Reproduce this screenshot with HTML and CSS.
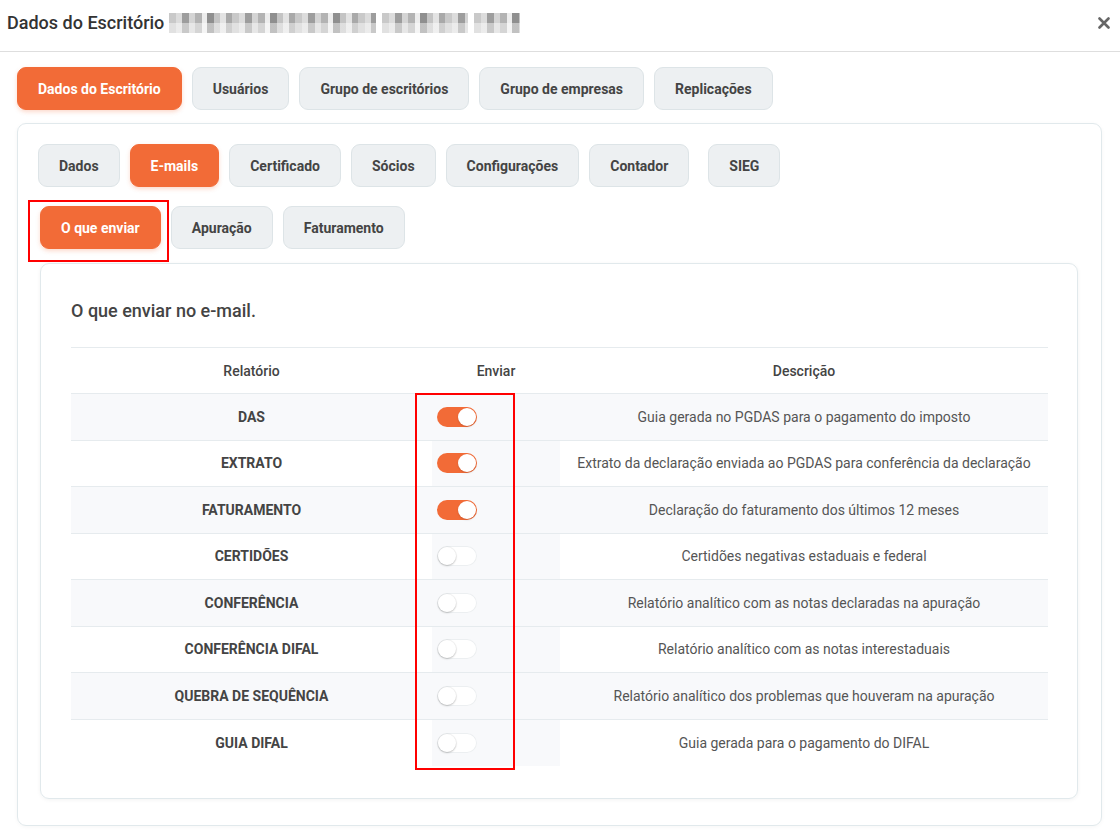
FILE: index.html
```html
<!DOCTYPE html>
<html lang="pt-BR">
<head>
<meta charset="utf-8">
<title>Dados do Escritório</title>
<link rel="stylesheet" href="styles.css">
</head>
<body>
<div class="modal">
  <header class="modal-head">
    <h1 class="modal-title">Dados do Escritório
      <span class="blur"><span class="blur-seg s1"></span><span class="blur-seg s2"></span><span class="blur-seg s3"></span></span>
    </h1>
    <button class="close" aria-label="Fechar">
      <svg width="12" height="12" viewBox="0 0 12 12"><path d="M1.5 1.5 L10.5 10.5 M10.5 1.5 L1.5 10.5" stroke="#666" stroke-width="2.6" stroke-linecap="round"/></svg>
    </button>
  </header>

  <div class="modal-body">
    <nav class="tabs outer-tabs">
      <button class="tab active">Dados do Escritório</button>
      <button class="tab">Usuários</button>
      <button class="tab">Grupo de escritórios</button>
      <button class="tab">Grupo de empresas</button>
      <button class="tab">Replicações</button>
    </nav>

    <section class="panel">
      <nav class="tabs inner-tabs">
        <button class="tab">Dados</button>
        <button class="tab active">E-mails</button>
        <button class="tab">Certificado</button>
        <button class="tab">Sócios</button>
        <button class="tab">Configurações</button>
        <button class="tab">Contador</button>
        <button class="tab sieg">SIEG</button>
      </nav>
      <nav class="tabs sub-tabs">
        <button class="tab active">O que enviar</button>
        <button class="tab">Apuração</button>
        <button class="tab">Faturamento</button>
      </nav>

      <div class="card">
        <h2 class="card-title">O que enviar no e-mail.</h2>
        <table class="grid">
          <colgroup><col class="c1"><col class="c2"><col class="c3"></colgroup>
          <thead>
            <tr><th>Relatório</th><th>Enviar</th><th>Descrição</th></tr>
          </thead>
          <tbody>
            <tr><td class="name">DAS</td><td class="send"><span class="switch on"></span></td><td class="desc">Guia gerada no PGDAS para o pagamento do imposto</td></tr>
            <tr><td class="name">EXTRATO</td><td class="send"><span class="switch on"></span></td><td class="desc">Extrato da declaração enviada ao PGDAS para conferência da declaração</td></tr>
            <tr><td class="name">FATURAMENTO</td><td class="send"><span class="switch on"></span></td><td class="desc">Declaração do faturamento dos últimos 12 meses</td></tr>
            <tr><td class="name">CERTIDÕES</td><td class="send"><span class="switch"></span></td><td class="desc">Certidões negativas estaduais e federal</td></tr>
            <tr><td class="name">CONFERÊNCIA</td><td class="send"><span class="switch"></span></td><td class="desc">Relatório analítico com as notas declaradas na apuração</td></tr>
            <tr><td class="name">CONFERÊNCIA DIFAL</td><td class="send"><span class="switch"></span></td><td class="desc">Relatório analítico com as notas interestaduais</td></tr>
            <tr><td class="name">QUEBRA DE SEQUÊNCIA</td><td class="send"><span class="switch"></span></td><td class="desc">Relatório analítico dos problemas que houveram na apuração</td></tr>
            <tr><td class="name">GUIA DIFAL</td><td class="send"><span class="switch"></span></td><td class="desc">Guia gerada para o pagamento do DIFAL</td></tr>
          </tbody>
        </table>
      </div>
    </section>
  </div>
</div>
<div class="mark mark-tab"></div>
<div class="mark mark-col"></div>
</body>
</html>
```

FILE: styles.css
```css
* { box-sizing: border-box; }
html, body { margin: 0; padding: 0; background: #fff; }
body {
  position: relative;
  width: 1120px;
  height: 840px;
  overflow: hidden;
  font-family: Roboto, "Liberation Sans", Arial, sans-serif;
  color: #444;
}
button { font-family: inherit; }

.modal-head {
  height: 52px;
  border-bottom: 1px solid #dedede;
  display: flex;
  align-items: center;
  justify-content: space-between;
  padding: 0 9px 6px 7px;
}
.modal-title {
  margin: 0;
  font-size: 18px;
  font-weight: 500;
  color: #333;
  display: flex;
  align-items: center;
  gap: 5px;
}
.blur { display: flex; gap: 6px; height: 20px; }
.blur-seg {
  display: block;
  height: 20px;
  background:
    linear-gradient(#fff0 0 50%, rgba(255,255,255,0.45) 50% 100%),
    repeating-linear-gradient(90deg, #c9c9c9 0 7px, #dcdcdc 7px 13px, #9d9d9d 13px 20px, #d4d4d4 20px 26px, #b3b3b3 26px 33px, #ededed 33px 38px, #8f8f8f 38px 45px, #c4c4c4 45px 51px, #e3e3e3 51px 57px, #a9a9a9 57px 63px);
}
.s1 { width: 207px; }
.s2 { width: 86px; }
.s3 { width: 46px; }
.close {
  border: 0;
  background: none;
  padding: 0;
  width: 14px;
  height: 14px;
  display: flex;
  align-items: center;
  justify-content: center;
}

.modal-body { padding: 15px 18px 0 17px; }

.tabs { display: flex; gap: 10px; }
.tab {
  height: 43px;
  padding: 0 20px;
  border: 1px solid #dde4e7;
  border-radius: 9px;
  background: #edf0f2;
  color: #444;
  font-size: 14px;
  font-weight: 700;
  cursor: pointer;
}
.tab.active {
  background: #f26b37;
  border-color: #f26b37;
  color: #fff;
  box-shadow: 0 2px 4px rgba(242,107,55,0.25);
}

.panel {
  margin-top: 13px;
  height: 703px;
  border: 1px solid #e1e9ec;
  border-radius: 9px;
  box-shadow: 0 1px 4px rgba(0,0,0,0.04);
  padding: 20px 23px 0 20px;
}
.inner-tabs .tab.sieg { margin-left: 9px; }
.sub-tabs { margin-top: 19px; margin-left: 2px; }

.card {
  margin-top: 14px;
  margin-left: 2px;
  height: 536px;
  border: 1px solid #e1e9ec;
  border-radius: 9px;
  box-shadow: 0 1px 4px rgba(0,0,0,0.05);
  padding: 36px 29px 0 30px;
}
.card-title {
  margin: 0 0 25px;
  font-size: 18px;
  font-weight: 500;
  color: #444;
  line-height: 22px;
}

.grid {
  width: 100%;
  border-collapse: collapse;
  table-layout: fixed;
  font-size: 14px;
}
.c1 { width: 361px; }
.c2 { width: 128px; }
.grid th {
  height: 46px;
  font-weight: 500;
  color: #444;
  text-align: center;
  border-top: 1px solid #e6ebee;
  border-bottom: 1px solid #e6ebee;
  padding: 0;
}
.grid td {
  height: 46.5px;
  padding: 0;
  border-bottom: 1px solid #e6ebee;
  text-align: center;
  vertical-align: middle;
}
.grid tbody tr:last-child td { border-bottom: 0; }
.grid tbody tr:nth-child(odd) { background: #f8f9fb; }
.grid td.send { background: #f8f9fb; text-align: left; padding-left: 5px; }
.grid td.name { font-weight: 700; color: #444; }
.grid td.desc { color: #555; }

.switch {
  position: relative;
  display: block;
  width: 40px;
  height: 20px;
  border-radius: 10px;
  background: #fff;
  box-shadow: inset 0 0 0 1px #eceff1;
}
.switch::after {
  content: "";
  position: absolute;
  top: 1px;
  left: 1px;
  width: 18px;
  height: 18px;
  border-radius: 50%;
  background: #fff;
  box-shadow: 0 1px 2px rgba(0,0,0,0.2), 0 0 0 1px rgba(0,0,0,0.04);
}
.switch.on { background: #f26b37; box-shadow: none; }
.switch.on::after { left: 21px; box-shadow: 0 1px 2px rgba(0,0,0,0.15); }

.mark {
  position: absolute;
  border: 2.5px solid #ff0000;
  pointer-events: none;
}
.mark-tab { left: 28px; top: 200px; width: 141px; height: 62px; }
.mark-col { left: 415px; top: 393px; width: 100px; height: 377px; }
```
